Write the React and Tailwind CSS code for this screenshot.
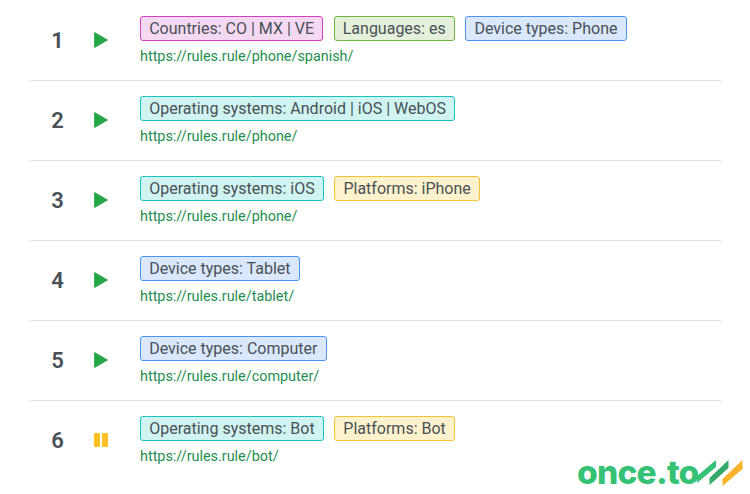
const tagStyles = {
  pink: "bg-[#f5d9f2] border-[#d63fc0]",
  green: "bg-[#e5f0db] border-[#6fb43f]",
  blue: "bg-[#d9e8fd] border-[#4b94f7]",
  teal: "bg-[#d0f4f1] border-[#17c5c0]",
  yellow: "bg-[#fff3cd] border-[#f5c335]",
};

const rows = [
  { n: 1, tags: [["Countries: CO | MX | VE", "pink"], ["Languages: es", "green"], ["Device types: Phone", "blue"]], url: "https://rules.rule/phone/spanish/" },
  { n: 2, tags: [["Operating systems: Android | iOS | WebOS", "teal"]], url: "https://rules.rule/phone/" },
  { n: 3, tags: [["Operating systems: iOS", "teal"], ["Platforms: iPhone", "yellow"]], url: "https://rules.rule/phone/" },
  { n: 4, tags: [["Device types: Tablet", "blue"]], url: "https://rules.rule/tablet/" },
  { n: 5, tags: [["Device types: Computer", "blue"]], url: "https://rules.rule/computer/" },
  { n: 6, paused: true, tags: [["Operating systems: Bot", "teal"], ["Platforms: Bot", "yellow"]], url: "https://rules.rule/bot/" },
];

function Play() {
  return (
    <svg width="14" height="16" viewBox="0 0 14 16" aria-hidden="true">
      <path d="M0.4 0.4 L13.6 8 L0.4 15.6 Z" fill="#28a745" stroke="#28a745" strokeWidth="0.8" strokeLinejoin="round" />
    </svg>
  );
}

function Pause() {
  return (
    <svg width="14" height="14" viewBox="0 0 14 14" aria-hidden="true">
      <rect x="0" y="0" width="6" height="14" rx="1.2" fill="#ffc023" />
      <rect x="8" y="0" width="6" height="14" rx="1.2" fill="#ffc023" />
    </svg>
  );
}

function Row({ row, last }) {
  return (
    <div className={`flex h-[80px] items-center border-b ${last ? "border-transparent" : "border-[#dee2e6]"}`}>
      <div className="mr-[9px] w-[55px] text-center text-[22px] leading-[24px] font-semibold text-[#495057]">{row.n}</div>
      <div className="flex w-[46px] items-center pb-px">{row.paused ? <Pause /> : <Play />}</div>
      <div className="flex flex-col gap-[5px] pt-[2px]">
        <div className="flex gap-[10.3px]">
          {row.tags.map(([label, color]) => (
            <span key={label} className={`h-[25px] rounded-[3px] border px-[8.2px] text-[16px] leading-[23px] text-[#495057] ${tagStyles[color]}`}>
              {label}
            </span>
          ))}
        </div>
        <a className="text-[14.4px] leading-[21px] text-[#1e8e4f]">{row.url}</a>
      </div>
    </div>
  );
}

export default function App() {
  return (
    <div className="relative h-[494px] w-[750px] overflow-hidden bg-white pt-px font-['Roboto',sans-serif]">
      <div className="ml-[30px] w-[691px]">
        {rows.map((row, i) => (
          <Row key={row.n} row={row} last={i === rows.length - 1} />
        ))}
      </div>
      <div className="absolute top-[455px] left-[577px]">
        <span className="font-['Inter',sans-serif] text-[33.5px] leading-[34px] font-extrabold tracking-[-0.8px] text-[#35c274]">once.to</span>
      </div>
      <svg width="46" height="27" viewBox="0 0 46 27" className="absolute top-[460px] left-[697px]" aria-hidden="true">
        <path d="M0 16 L19 0 L19 7 L0 23 Z" fill="#35c274" />
        <path d="M12.5 18 L31.5 0 L31.5 8 L12.5 25 Z" fill="#35a96a" />
        <path d="M25.5 19 L45.5 0 L45.5 9 L25.5 26 Z" fill="#fdb32b" />
      </svg>
    </div>
  );
}
